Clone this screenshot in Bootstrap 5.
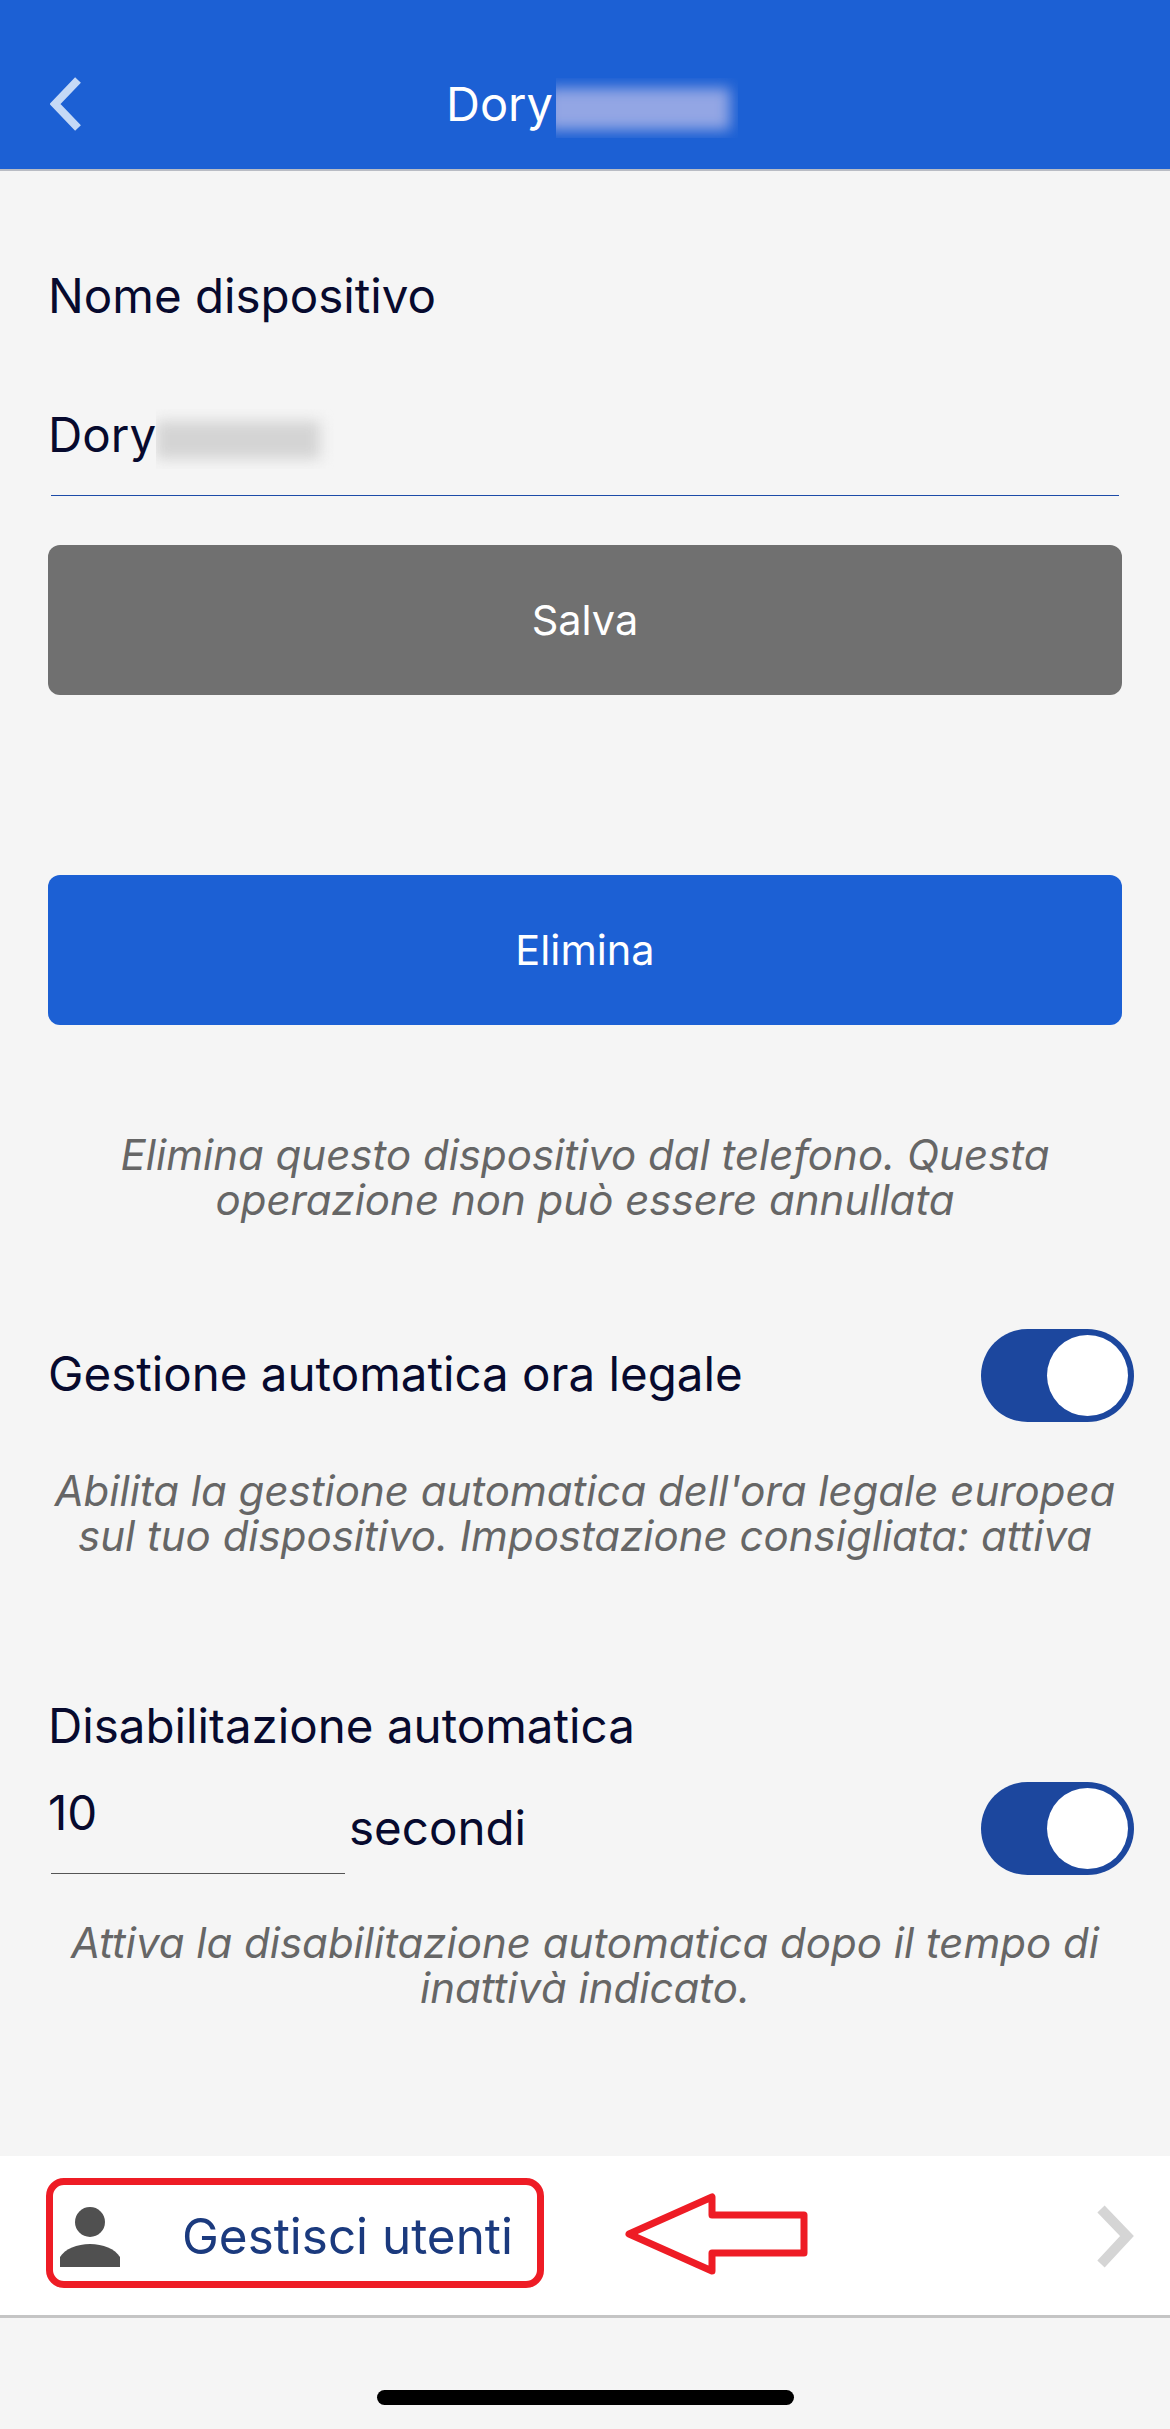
<!DOCTYPE html>
<html lang="it">
<head>
  <meta charset="UTF-8">
  <meta name="viewport" content="width=device-width, initial-scale=1">
  <title>Dory</title>
  <link href="https://cdn.jsdelivr.net/npm/bootstrap@5.3.0/dist/css/bootstrap.min.css" rel="stylesheet">
  <style>
    body {
      background: #f5f5f5;
      color: #070a2e;
      font-family: Inter, "Liberation Sans", sans-serif;
      font-size: 47.5px;
      height: 2429px;
      overflow: hidden;
    }
    .top-bar {
      height: 171px;
      background: #1c60d4;
      border-bottom: 2px solid #b9bcc4;
      padding: 77px 0 0 50px;
      color: #fff;
    }
    .top-title {
      margin-left: 396px;
      margin-top: -57px;
      line-height: 60px;
      font-size: 47px;
    }
    .smudge {
      display: inline-block;
      overflow: hidden;
      vertical-align: middle;
    }
    .smudge::before {
      content: "";
      display: block;
      filter: blur(7px);
    }
    .smudge-head { width: 182px; height: 60px; margin-left: 3px; }
    .smudge-head::before { background: #93a6e4; margin: 10px 8px 8px -10px; height: 42px; }
    .smudge-field { width: 178px; height: 60px; }
    .smudge-field::before { background: #d4d4d4; margin: 12px 14px 10px 0; height: 38px; }
    .page-body { padding: 0 48px; }
    .field-label { margin-top: 95px; line-height: 60px; }
    .name-field {
      margin: 79px 0 0;
      height: 92px;
      line-height: 60px;
    }
    .name-field::after {
      content: "";
      display: block;
      height: 1px;
      margin: 26px 3px 0;
      background: #1c4ba8;
    }
    .wide-btn {
      display: block;
      width: 100%;
      height: 150px;
      border: 0;
      border-radius: 12px;
      color: #fff;
      font-size: 41.5px;
    }
    .btn-save { background: #707070; margin-top: 48px; }
    .btn-remove { background: #1c60d4; margin-top: 180px; }
    .hint {
      font-size: 42px;
      line-height: 45px;
      font-style: italic;
      color: #666;
      text-align: center;
    }
    .toggle-pill {
      display: block;
      position: relative;
      flex: none;
      width: 153px;
      height: 93px;
      margin-right: -12px;
      border-radius: 47px;
      background: #1c479e;
    }
    .toggle-pill::after {
      content: "";
      position: absolute;
      top: 6px;
      right: 6px;
      width: 81px;
      height: 81px;
      border-radius: 50%;
      background: #fff;
    }
    .row-a-label { margin-top: -3px; }
    .secs-input {
      width: 294px;
      height: 118px;
      margin: 0 0 1px 3px;
      padding-top: 29px;
      border-bottom: 1px solid #555;
      line-height: 56px;
      text-indent: -3px;
    }
    .secs-unit { margin-bottom: 12px; }
    .hint-a { margin-top: 107px; }
    .row-a { margin-top: 107px; }
    .hint-b { margin-top: 46px; }
    .row-b { margin-top: 138px; }
    .hint-c { margin-top: 45px; }
    .users-row {
      margin-top: 146px;
      height: 162px;
      background: #fff;
      border-bottom: 3px solid #c5c5c5;
      padding: 22px 35px 0 46px;
    }
    .users-box {
      width: 498px;
      height: 110px;
      border: 7px solid #ee1c25;
      border-radius: 18px;
      padding-left: 7px;
      color: #1b3a7e;
    }
    .person-mark { margin-top: 8px; }
    .users-label { margin: 6px 0 0 62px; line-height: 60px; font-size: 49.4px; }
    .arrow-mark { margin: 15px 0 0 80px; }
    .chev-mark { margin-top: 27px; }
    .home-bar {
      width: 417px;
      height: 15px;
      margin: 72px auto 0;
      background: #000;
      border-radius: 8px;
    }
  </style>
</head>
<body>
  <header class="top-bar">
    <svg width="32" height="54" viewBox="0 0 32 54" class="d-block"><path d="M28 3 5 27l23 24" fill="none" stroke="#c5d9f6" stroke-width="8"/></svg>
    <div class="top-title">Dory<span class="smudge smudge-head"></span></div>
  </header>

  <main class="page-body">
    <div class="field-label">Nome dispositivo</div>
    <div class="name-field">Dory<span class="smudge smudge-field"></span></div>
    <button type="button" class="btn wide-btn btn-save">Salva</button>
    <button type="button" class="btn wide-btn btn-remove">Elimina</button>
    <p class="hint mb-0 hint-a">Elimina questo dispositivo dal telefono. Questa<br>operazione non può essere annullata</p>

    <div class="d-flex align-items-center justify-content-between row-a">
      <span class="row-a-label">Gestione automatica ora legale</span>
      <span class="toggle-pill"></span>
    </div>
    <p class="hint mb-0 hint-b">Abilita la gestione automatica dell'ora legale europea<br>sul tuo dispositivo. Impostazione consigliata: attiva</p>

    <div class="field-label row-b">Disabilitazione automatica</div>
    <div class="d-flex align-items-end justify-content-between">
      <div class="d-flex align-items-end">
        <div class="secs-input">10</div>
        <span class="ms-1 secs-unit">secondi</span>
      </div>
      <span class="toggle-pill"></span>
    </div>
    <p class="hint mb-0 hint-c">Attiva la disabilitazione automatica dopo il tempo di<br>inattivà indicato.</p>
  </main>

  <section class="users-row d-flex align-items-start">
    <div class="users-box d-flex align-items-center">
      <svg width="60" height="60" viewBox="0 0 60 60" class="person-mark"><circle cx="30" cy="15" r="15" fill="#505050"/><path d="M0 60V50C5 42 17 37 30 37s25 5 30 13v10z" fill="#505050"/></svg>
      <span class="users-label">Gestisci utenti</span>
    </div>
    <svg width="186" height="86" viewBox="0 0 186 86" class="arrow-mark"><path d="M5 41 88 4v18h92v38H88v18z" fill="#fff" stroke="#ee1c25" stroke-width="7" stroke-linejoin="round"/></svg>
    <svg width="38" height="66" viewBox="0 0 38 66" class="ms-auto chev-mark"><path d="M4 4l26 27L4 59" fill="none" stroke="#d5d5d5" stroke-width="10"/></svg>
  </section>
  <div class="home-bar"></div>
</body>
</html>
